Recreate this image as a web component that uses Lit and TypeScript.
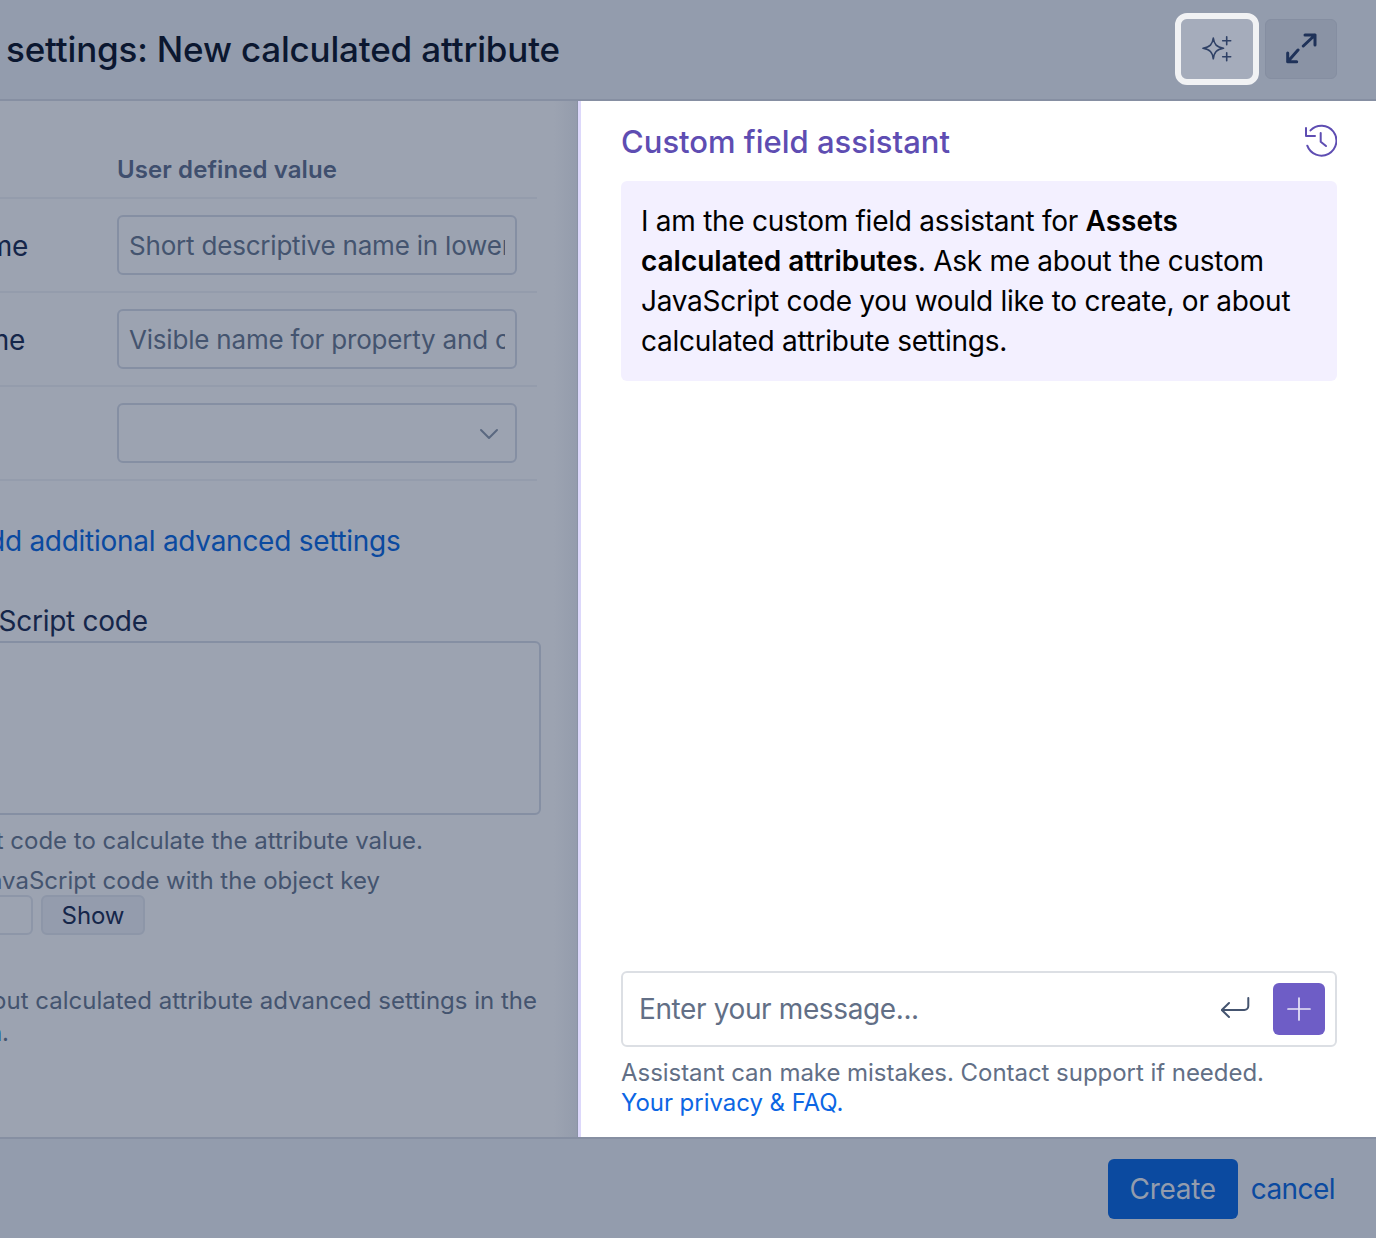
import { LitElement, html, css, svg } from 'lit';
import { customElement } from 'lit/decorators.js';

const sparkle = svg`<path d="M12.300 4C13.200 10.500 15.500 13 22.500 14.300 15.500 15.600 13.200 18 12.300 24.800 11.400 18 9 15.600 2 14.300 9 13 11.400 10.500 12.300 4z"/><path d="M25.700 2.700v8M21.700 6.700h8M25.700 18.700v8M21.700 22.700h8"/>`;

@customElement('app-root')
export class AppRoot extends LitElement {
    static styles = css`
    :host {
      display: flex;
      flex-direction: column;
      height: 100vh;
      overflow: hidden;
      background: #9ca3b1;
      font-family: Inter, "Liberation Sans", sans-serif;
      color: #44546f;
      letter-spacing: -0.27px;
    }

    .header {
      height: 101px;
      flex: none;
      box-sizing: border-box;
      display: flex;
      align-items: center;
      justify-content: space-between;
      padding: 0 39px 1px 0;
      background: #939cad;
      border-bottom: 2px solid #868fa2;
    }
    .title {
      margin: 0 0 1px 6px;
      font-size: 35px;
      font-weight: 500;
      letter-spacing: -0.18px;
      color: #0b1730;
      white-space: nowrap;
    }
    .actions { display: flex; gap: 6px; align-items: center; }
    .btn-ai {
      width: 72px;
      height: 60px;
      border-radius: 6px;
      background: #a5acbb;
      outline: 6px solid #f1f2f4;
      margin-right: 6px;
      display: flex;
      align-items: center;
      justify-content: center;
    }
    .btn-expand {
      width: 72px;
      height: 60px;
      box-sizing: border-box;
      border-radius: 6px;
      background: #8a93a5;
      border: 1px solid #858ea1;
      display: flex;
      align-items: center;
      justify-content: center;
    }

    .main { flex: 1; display: flex; min-height: 0; }

    .left {
      width: 577px;
      flex: none;
      overflow: hidden;
      background: linear-gradient(to right, #9ca3b1 96%, #949cac);
      border-right: 1px solid #8a93a6;
    }
    .form { margin-left: -400px; width: 941px; }

    .col-head {
      margin: 54px 0 0 517px;
      font-size: 24px;
      font-weight: 600;
      letter-spacing: 0.1px;
      line-height: 30px;
      color: #3f4f6e;
    }
    .row {
      height: 94px;
      box-sizing: border-box;
      display: grid;
      grid-template-columns: 428px 400px;
      column-gap: 89px;
      align-items: center;
      border-bottom: 2px solid #949cac;
      width: 937px;
    }
    .row.first { border-top: 2px solid #949cac; margin-top: 12px; height: 96px; }
    .row-label { font-size: 28px; color: #15264a; white-space: nowrap; text-align: right; padding-top: 1px; }
    .row-label.narrow { padding-right: 3px; }
    .field {
      height: 60px;
      box-sizing: border-box;
      border: 2px solid #858fa3;
      border-radius: 6px;
      padding: 1px 10px 0;
      display: flex;
      align-items: center;
      justify-content: space-between;
      font-size: 26px;
      letter-spacing: -0.2px;
      color: #44546f;
      overflow: hidden;
      white-space: nowrap;
    }
    .field span { overflow: hidden; }
    .field.select { padding-right: 16px; }

    .add-link {
      margin: 42px 0 0 0;
      padding-left: 400px;
      font-size: 28px;
      line-height: 36px;
      color: #0b4aa0;
      white-space: nowrap;
    }
    .add-link span { margin-left: -31px; }

    .script-label {
      margin-top: 44px;
      padding-left: 400px;
      font-size: 28px;
      line-height: 36px;
      color: #15264a;
      white-space: nowrap;
    }
    .script-label span { margin-left: -63px; }
    .textarea {
      height: 174px;
      width: 941px;
      box-sizing: border-box;
      margin-top: 2px;
      border: 2px solid #858fa3;
      border-radius: 6px;
    }
    .help {
      font-size: 24px;
      letter-spacing: 0;
      line-height: 40px;
      color: #44546f;
      white-space: nowrap;
      display: flex;
      justify-content: flex-end;
    }
    .help.one { margin-top: 6px; width: 823px; }
    .help.two { width: 780px; }

    .show-row {
      display: flex;
      gap: 8px;
      margin-left: 340px;
      margin-top: -6px;
    }
    .ghost {
      width: 93px;
      height: 40px;
      box-sizing: border-box;
      border: 2px solid #8d96a8;
      border-radius: 6px;
    }
    .show {
      width: 104px;
      height: 40px;
      box-sizing: border-box;
      border: 2px solid #8d96a8;
      border-radius: 6px;
      background: #949cad;
      display: flex;
      align-items: center;
      justify-content: center;
      font-size: 24px;
      letter-spacing: -0.1px;
      color: #15264a;
    }
    .about {
      margin-top: 50px;
      font-size: 24px;
      letter-spacing: 0;
      line-height: 32px;
      width: 937px;
      text-align: right;
      white-space: nowrap;
    }
    .about-end { width: 409px; text-align: right; font-size: 24px; letter-spacing: 0; line-height: 32px; }
    .about-end a { color: #0b4aa0; }

    .assistant {
      flex: 1;
      min-width: 0;
      box-sizing: border-box;
      background: #fff;
      border-left: 3px solid #ddd8fb;
      padding: 0 39px 19px 40px;
      display: flex;
      flex-direction: column;
    }
    .assistant-head {
      height: 80px;
      display: flex;
      align-items: center;
      justify-content: space-between;
      flex: none;
    }
    .assistant-head h2 {
      margin: 0;
      font-size: 31px;
      font-weight: 500;
      letter-spacing: 0;
      color: #5e4db2;
    }
    .bubble {
      background: #f3f0ff;
      border-radius: 6px;
      padding: 20px 20px 0;
      font-size: 28px;
      line-height: 40px;
      color: #000;
      height: 200px;
      box-sizing: border-box;
    }
    .bubble b { font-weight: 600; letter-spacing: -0.03px; }
    .spacer { flex: 1; }
    .composer {
      height: 76px;
      box-sizing: border-box;
      border: 2px solid #dcdfe4;
      border-radius: 6px;
      display: flex;
      align-items: center;
      padding: 0 10px 0 16px;
      font-size: 28px;
      letter-spacing: -0.38px;
      color: #626f86;
    }
    .composer .ph { flex: 1; }
    .send {
      width: 52px;
      height: 52px;
      margin-left: 22px;
      border-radius: 6px;
      background: #6e5dc6;
      display: flex;
      align-items: center;
      justify-content: center;
    }
    .note {
      margin-top: 11px;
      font-size: 24px;
      letter-spacing: -0.04px;
      line-height: 30px;
      color: #626f86;
    }
    .note a { color: #0c66e4; }

    .footer {
      height: 101px;
      flex: none;
      box-sizing: border-box;
      background: #939cad;
      border-top: 2px solid #868fa2;
      display: flex;
      align-items: center;
      justify-content: flex-end;
      padding-right: 41px;
      gap: 14px;
    }
    .create {
      width: 130px;
      height: 60px;
      border-radius: 6px;
      background: #0b4aa0;
      color: #939cad;
      display: flex;
      align-items: center;
      justify-content: center;
      font-size: 28px;
      letter-spacing: -0.3px;
    }
    .cancel { color: #0b4aa0; font-size: 28px; letter-spacing: -0.55px; margin-left: -1px; }
    svg { display: block; fill: none; stroke-linecap: round; stroke-linejoin: round; }
  `;

    render() {
        return html`
      <div class="header">
        <h1 class="title">settings: New calculated attribute</h1>
        <div class="actions">
          <div class="btn-ai">
            <svg width="32" height="30" viewBox="0 0 32 30" stroke="#2f4166" stroke-width="1.600">${sparkle}</svg>
          </div>
          <div class="btn-expand">
            <svg width="32" height="32" viewBox="0 0 32 32" stroke="#1f3259" stroke-width="3">
              <path d="M18.300 13 30 2M20 2h10v10M13 17 2.700 28.700M2.700 20v8.700h9"/>
            </svg>
          </div>
        </div>
      </div>

      <div class="main">
        <div class="left">
          <div class="form">
            <div class="col-head">User defined value</div>
            <div class="row first">
              <div class="row-label">Name</div>
              <div class="field"><span>Short descriptive name in lowercase</span></div>
            </div>
            <div class="row">
              <div class="row-label narrow">Display name</div>
              <div class="field"><span>Visible name for property and card</span></div>
            </div>
            <div class="row">
              <div class="row-label"></div>
              <div class="field select">
                <span></span>
                <svg width="20" height="12" viewBox="0 0 20 12" stroke="#5a6880" stroke-width="2"><path d="M2 2l8 8 8-8"/></svg>
              </div>
            </div>
            <div class="add-link"><span>Add additional advanced settings</span></div>
            <div class="script-label"><span>JavaScript code</span></div>
            <div class="textarea"></div>
            <div class="help one">Enter JavaScript code to calculate the attribute value.</div>
            <div class="help two">Or load JavaScript code with the object key</div>
            <div class="show-row">
              <div class="ghost"></div>
              <div class="show">Show</div>
            </div>
            <div class="about">Read more about calculated attribute advanced settings in the</div>
            <div class="about-end"><a>documentation</a>.</div>
          </div>
        </div>

        <div class="assistant">
          <div class="assistant-head">
            <h2>Custom field assistant</h2>
            <svg width="34" height="34" viewBox="0 0 34 34" stroke="#5e4db2" stroke-width="2">
              <path d="M7.500 6.400A15 15 0 1 1 4.300 21.700"/>
              <path d="M3 4v8h9"/>
              <path d="M17.700 9v8.700l5.300 4.300"/>
            </svg>
          </div>
          <div class="bubble">
            I am the custom field assistant for <b>Assets calculated attributes</b>. Ask me about the custom
            JavaScript code you would like to create, or about calculated attribute settings.
          </div>
          <div class="spacer"></div>
          <div class="composer">
            <span class="ph">Enter your message...</span>
            <svg width="30" height="24" viewBox="0 0 30 24" stroke="#44546f" stroke-width="2">
              <path d="M27.300 1v8a4 4 0 0 1-4 4H.8M8 6 .8 13 8 20"/>
            </svg>
            <div class="send">
              <svg width="24" height="24" viewBox="0 0 24 24" stroke="#e9e6f8" stroke-width="1.700"><path d="M12 1v22M1 12h22"/></svg>
            </div>
          </div>
          <div class="note">
            Assistant can make mistakes. Contact support if needed.<br />
            <a>Your privacy &amp; FAQ</a><a>.</a>
          </div>
        </div>
      </div>

      <div class="footer">
        <div class="create">Create</div>
        <div class="cancel">cancel</div>
      </div>
    `;
    }
}
